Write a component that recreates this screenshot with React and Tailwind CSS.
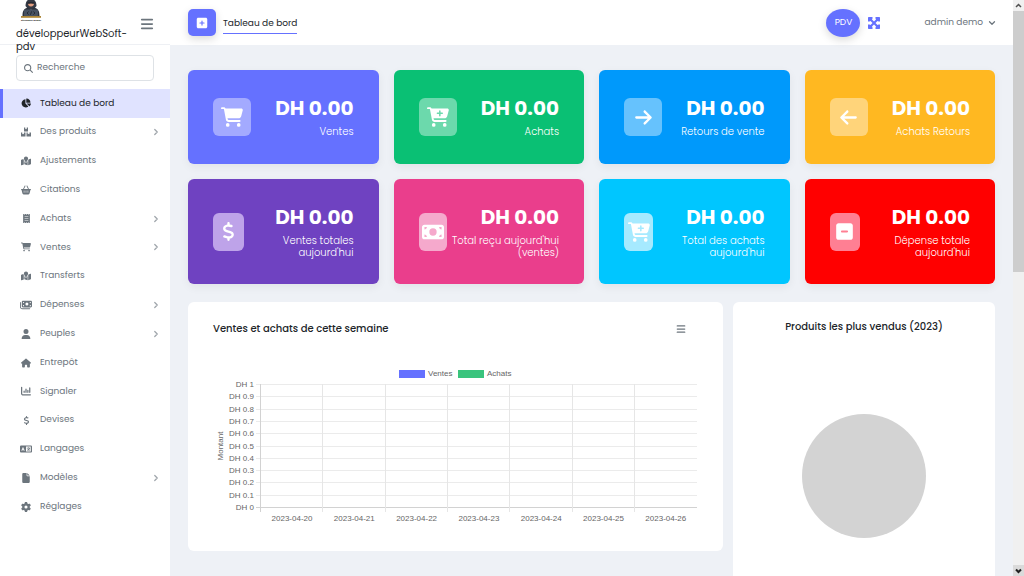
import React from "react";
import {
  FaArrowLeft, FaArrowRight, FaBars, FaBasketShopping, FaCartPlus, FaCartShopping,
  FaChartColumn, FaChartPie, FaDollarSign, FaFile, FaGear, FaHouse, FaLanguage, FaMagnifyingGlass,
  FaMapLocation, FaMoneyBill, FaMoneyBills, FaReceipt, FaSquareMinus, FaSquarePlus, FaUser,
} from "react-icons/fa6";
import { ChevronDown, ChevronRight } from "lucide-react";

function BoxesIcon({ size, className }) {
  return (
    <svg width={size} height={size} viewBox="0 0 20 20" className={className} fill="currentColor" aria-hidden="true">
      <path d="M6 1h2.500v3.500l1.500-1 1.500 1V1H14v8H6zM0 11h2.500v3.500l1.700-1 1.700 1V11H9v8H0zM11 11h2.500v3.500l1.700-1 1.700 1V11H20v8h-9z" />
    </svg>
  );
}

function ExpandIcon() {
  return (
    <svg width="12" height="12" viewBox="0 0 24 24" fill="currentColor" aria-hidden="true">
      <path d="M1.500 0H9v3L8 5l4 4 4-4-1-2V0h7.500A1.500 1.500 0 0 1 24 1.500V9h-3l-2-1-4 4 4 4 2-1h3v7.500a1.500 1.500 0 0 1-1.500 1.500H15v-3l1-2-4-4-4 4 1 2v3H1.500A1.500 1.500 0 0 1 0 22.500V15h3l2 1 4-4-4-4-2 1H0V1.500A1.500 1.500 0 0 1 1.500 0z" />
    </svg>
  );
}

const MENU = [
  { label: "Tableau de bord", Icon: FaChartPie, active: true },
  { label: "Des produits", Icon: BoxesIcon, sub: true },
  { label: "Ajustements", Icon: FaMapLocation },
  { label: "Citations", Icon: FaBasketShopping },
  { label: "Achats", Icon: FaReceipt, sub: true, size: 9 },
  { label: "Ventes", Icon: FaCartShopping, sub: true },
  { label: "Transferts", Icon: FaMapLocation },
  { label: "Dépenses", Icon: FaMoneyBills, sub: true, size: 12 },
  { label: "Peuples", Icon: FaUser, sub: true },
  { label: "Entrepôt", Icon: FaHouse },
  { label: "Signaler", Icon: FaChartColumn },
  { label: "Devises", Icon: FaDollarSign, size: 9 },
  { label: "Langages", Icon: FaLanguage, size: 12 },
  { label: "Modèles", Icon: FaFile, sub: true },
  { label: "Réglages", Icon: FaGear },
];

const CARDS = [
  { label: "Ventes", Icon: FaCartShopping, bg: "bg-[#6571ff]", tile: "w-[38px] bg-[#a3aaff]" },
  { label: "Achats", Icon: FaCartPlus, bg: "bg-[#0ac074]", tile: "w-[38px] bg-[#6cd9ac]" },
  { label: "Retours de vente", Icon: FaArrowRight, bg: "bg-[#0099fb]", tile: "w-[38px] bg-[#66c2fd]" },
  { label: "Achats Retours", Icon: FaArrowLeft, bg: "bg-[#ffb821]", tile: "w-[38px] bg-[#ffd47a]" },
  { label: "Ventes totales aujourd'hui", Icon: FaDollarSign, bg: "bg-[#6f42c1]", tile: "w-[31px] bg-[#bea3e9]", text: "w-[80px]" },
  { label: "Total reçu aujourd'hui (ventes)", Icon: FaMoneyBill, bg: "bg-[#ea3e8c]", tile: "w-[28px] bg-[#f5a9cc]", text: "w-[112px]" },
  { label: "Total des achats aujourd'hui", Icon: FaCartPlus, bg: "bg-[#00c6ff]", tile: "w-[29px] bg-[#a6eaff]", text: "w-[100px]" },
  { label: "Dépense totale aujourd'hui", Icon: FaSquareMinus, bg: "bg-[#ff0000]", tile: "w-[30px] bg-[#ff7f93]", text: "w-[90px]" },
];

const DAYS = ["20", "21", "22", "23", "24", "25", "26"];
const TICKS = ["1", "0.9", "0.8", "0.7", "0.6", "0.5", "0.4", "0.3", "0.2", "0.1", "0"];

function Logo() {
  return (
    <svg viewBox="0 0 22 22" className="h-[22px] w-[22px]" role="img" aria-label="Logo">
      <path d="M5.5 6 C5.5 1 8 -1 11 -1 C14 -1 16.500 1 16.500 6 L14 9 L8 9 Z" fill="#343944" />
      <path d="M8.2 3 h5.6 v2 q-2.800 3.200 -5.600 0z" fill="#e3a083" />
      <path d="M7.6 2.200 h6.800 v1.600 h-2.800 l-.6-.5 -.6.5 H7.600z" fill="#22252c" />
      <path d="M2.500 16 C2.500 11 4 8.600 8 7.600 L11 9.600 L14 7.600 C18 8.600 19.500 11 19.500 16z" fill="#2d323c" />
      <rect x="4" y="9.600" width="14" height="7" rx="0.8" fill="#465060" />
      <path d="M8.600 11.600 l-1.600 1.500 1.600 1.500 M13.400 11.600 l1.600 1.500 -1.600 1.500 M11.600 11.400 l-1.200 3.400" fill="none" stroke="#1d222a" strokeWidth="0.8" />
      <rect x="1" y="16" width="20" height="1.800" fill="#ad8636" />
      <text x="11" y="20.500" fontSize="1.800" fontWeight="700" textAnchor="middle" fill="#222">développeur WebSoft</text>
    </svg>
  );
}

function Sidebar() {
  return (
    <aside className="w-[170px] shrink-0 bg-white">
      <div className="flex h-[45px] items-start justify-between border-b border-[#eef0f4] px-4">
        <a href="#accueil" className="block w-[116px] text-[10px] leading-[13px] text-[#212529]">
          <span className="ml-1 block h-[27px]"><Logo /></span>
          développeurWebSoft-<br />pdv
        </a>
        <button type="button" aria-label="Menu" className="mt-[17px] text-[#6c757d]">
          <FaBars size={14} />
        </button>
      </div>
      <div className="px-4 pt-[10px]">
        <label className="flex h-[26px] items-center gap-1 rounded-[4px] border border-[#dee2e6] px-[7px] text-[#6c757d]">
          <FaMagnifyingGlass size={9} className="shrink-0" aria-hidden="true" />
          <input
            type="search"
            aria-label="Recherche"
            placeholder="Recherche"
            className="w-full min-w-0 bg-transparent text-[9px] outline-none placeholder:text-[#6c757d]"
          />
        </label>
      </div>
      <nav className="mt-2">
        <ul className="grid h-[432px] grid-rows-15">
          {MENU.map(({ label, Icon, active, sub, size }) => (
            <li key={label} className="flex">
              <a
                href="#menu"
                className={
                  active
                    ? "flex flex-1 items-center border-l-3 border-[#6571ff] bg-[#e0e3ff] pr-[9px] pl-[17px] text-[9px] text-[#212529]"
                    : "flex flex-1 items-center border-l-3 border-transparent pr-[9px] pl-[17px] text-[9px] text-[#6c757d]"
                }
              >
                <span className="flex w-3 justify-center"><Icon size={size || 10} className="shrink-0" /></span>
                <span className="ml-2 flex-1">{label}</span>
                {sub && <ChevronRight size={10} strokeWidth={3} className="text-[#a0a6ac]" />}
              </a>
            </li>
          ))}
        </ul>
      </nav>
    </aside>
  );
}

function Header() {
  return (
    <header className="flex h-[45px] items-center bg-white pr-4 pl-[18px]">
      <button
        type="button"
        aria-label="Ajouter"
        className="flex h-[27px] w-7 items-center justify-center rounded-[5px] bg-[#6571ff] text-white shadow-[0_3px_8px_rgba(0,0,0,0.15)]"
      >
        <FaSquarePlus size={12} />
      </button>
      <a href="#tableau" className="mt-[5px] ml-[7px] border-b border-[#6571ff] pb-[3px] text-[9px] leading-[14px] text-[#212529]">
        Tableau de bord
      </a>
      <button type="button" className="ml-auto h-7 w-[34px] rounded-[50%] bg-[#6571ff] text-[9px] text-white shadow-[0_3px_8px_rgba(0,0,0,0.15)]">
        PDV
      </button>
      <button type="button" aria-label="Plein écran" className="ml-2 text-[#6571ff]">
        <ExpandIcon />
      </button>
      <button type="button" className="ml-11 flex items-center gap-1 text-[9px] text-[#6c757d]">
        admin demo
        <ChevronDown size={10} strokeWidth={3} />
      </button>
    </header>
  );
}

function StatCard({ label, Icon, bg, tile, text }) {
  return (
    <div className={`flex items-center justify-between rounded-[6px] px-[25px] text-white shadow-[0_3px_10px_rgba(0,0,0,0.06)] ${bg}`}>
      <div className={`flex h-[38px] shrink-0 items-center justify-center rounded-[6px] ${tile}`}>
        <Icon size={Icon === FaCartShopping || Icon === FaCartPlus || Icon === FaMoneyBill ? 22 : 19} className="shrink-0" />
      </div>
      <div className="flex flex-col items-end text-right">
        <h2 className="text-[20px] leading-6 font-bold whitespace-nowrap">DH 0.00</h2>
        <h3 className={`mt-[6px] text-[10px] leading-3 font-light ${text || "whitespace-nowrap"}`}>{label}</h3>
      </div>
    </div>
  );
}

function WeekChart() {
  const step = 12.3;
  const col = 62.3;
  return (
    <svg
      viewBox="0 0 485 160"
      className="block w-full font-['Liberation_Sans',sans-serif]"
      fontSize="8"
      fill="#666666"
      role="img"
      aria-label="Ventes et achats de cette semaine"
    >
      <rect x="186" y="3" width="26" height="8" fill="#6571ff" />
      <text x="215" y="9">Ventes</text>
      <rect x="245" y="3" width="26" height="8" fill="#3ac47d" />
      <text x="274" y="9">Achats</text>
      {TICKS.map((t, i) => (
        <g key={t}>
          <line
            x1="43" x2="484" y1={Math.round(17 + i * step) + 0.5} y2={Math.round(17 + i * step) + 0.5}
            stroke={t === "0" ? "#d2d2d2" : "#ebebeb"}
          />
          <text x="41" y={Math.round(20 + i * step)} textAnchor="end">{`DH ${t}`}</text>
        </g>
      ))}
      {DAYS.map((d, i) => (
        <g key={d}>
          <line
            y1="17" y2="145" x1={Math.round(47 + i * col) + 0.5} x2={Math.round(47 + i * col) + 0.5}
            stroke={i === 0 ? "#d2d2d2" : "#e6e6e6"}
          />
          <text x={79 + i * col} y="154" textAnchor="middle">{`2023-04-${d}`}</text>
        </g>
      ))}
      <text transform="translate(10 79) rotate(-90)" textAnchor="middle">Montant</text>
    </svg>
  );
}

export default function App() {
  return (
    <div className="flex h-screen overflow-hidden bg-[#eef1f6] font-[Poppins,Inter,sans-serif]">
      <Sidebar />
      <div className="flex min-w-0 flex-1 flex-col">
        <Header />
        <main className="flex min-h-0 flex-1 flex-col overflow-hidden px-[18px] pt-[25px]">
          <section className="grid shrink-0 grid-cols-4 grid-rows-[94px_105px] gap-[15px]">
            {CARDS.map((c) => <StatCard key={c.label} {...c} />)}
          </section>
          <section className="mt-[18px] grid shrink-0 grid-cols-[535fr_262fr] items-start gap-[10px]">
            <div className="rounded-[6px] bg-white px-[25px] pt-5 pb-6">
              <div className="mb-[31px] flex items-center justify-between pr-3">
                <h2 className="text-[10px] leading-[14px] font-medium text-[#212529]">Ventes et achats de cette semaine</h2>
                <button type="button" aria-label="Options du graphique" className="text-[#6c757d]">
                  <FaBars size={10} />
                </button>
              </div>
              <WeekChart />
            </div>
            <div className="flex h-[300px] flex-col items-center rounded-[6px] bg-white pt-[18px]">
              <h2 className="text-[10px] leading-[14px] font-medium text-[#212529]">Produits les plus vendus (2023)</h2>
              <svg viewBox="0 0 124 124" className="mt-20 w-[124px]" role="img" aria-label="Produits les plus vendus">
                <circle cx="62" cy="62" r="62" fill="#d3d3d3" />
              </svg>
            </div>
          </section>
        </main>
      </div>
      <div className="flex w-[11px] shrink-0 flex-col items-center bg-[#f0f0f0]" aria-hidden="true">
        <svg viewBox="0 0 11 11" className="w-[11px]"><path d="M3 7 L5.5 4.5 L8 7" fill="none" stroke="#505050" strokeWidth="1.5" /></svg>
        <div className="h-[261px] w-full bg-[#cdcdcd]" />
        <svg viewBox="0 0 11 11" className="mt-auto w-[11px] bg-[#dadada]"><path d="M3 4.5 L5.5 7 L8 4.5" fill="none" stroke="#202020" strokeWidth="2" /></svg>
      </div>
    </div>
  );
}
